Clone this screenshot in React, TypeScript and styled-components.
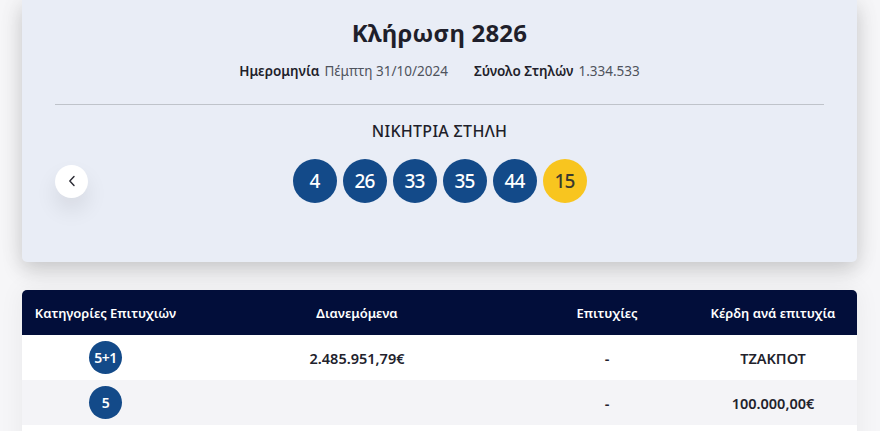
import React from "react";
import styled, { createGlobalStyle } from "styled-components";

const Global = createGlobalStyle`
  html, body { margin: 0; padding: 0; }
  body {
    background: #f6f6f8;
    font-family: "Noto Sans", "Liberation Sans", sans-serif;
    color: #1f1f29;
    overflow: hidden;
  }
`;

const Page = styled.div`
  width: 880px;
  padding: 0 23px 0 22px;
  box-sizing: border-box;
  display: flex;
  flex-direction: column;
  gap: 28px;
`;

const Card = styled.section`
  background: #e9edf6;
  border-radius: 0 0 5px 5px;
  box-shadow: 0 8px 20px rgba(0, 0, 0, 0.17), 0 0 30px rgba(0, 0, 0, 0.05);
  padding: 17px 33px 59px;
  display: flex;
  flex-direction: column;
  align-items: center;
`;

const Title = styled.h1`
  margin: 0;
  font-size: 24px;
  line-height: 32px;
  font-weight: 700;
  color: #1f1f2b;
  letter-spacing: 0.2px;
`;

const Info = styled.div`
  margin-top: 12px;
  display: flex;
  gap: 26px;
  font-size: 13.5px;
  line-height: 20px;
`;

const InfoItem = styled.span`
  display: inline-flex;
  gap: 5px;
`;

const Label = styled.b`
  font-weight: 600;
  color: #1f1f2b;
`;

const Value = styled.span`
  font-weight: 400;
  color: #4f535c;
`;

const Divider = styled.hr`
  align-self: stretch;
  margin: 23px 0 0;
  border: 0;
  border-top: 1px solid #bfc3ca;
`;

const Section = styled.h2`
  margin: 16px 0 0;
  font-size: 16px;
  line-height: 20px;
  font-weight: 500;
  color: #1f1f2b;
  letter-spacing: 0.3px;
`;

const BallRow = styled.div`
  margin-top: 18px;
  align-self: stretch;
  display: grid;
  grid-template-columns: 1fr auto 1fr;
  align-items: center;
`;

const PrevButton = styled.button`
  justify-self: start;
  width: 33px;
  height: 33px;
  border-radius: 50%;
  border: 0;
  background: #ffffff;
  box-shadow: 0 12px 22px rgba(0, 0, 0, 0.09);
  display: flex;
  align-items: center;
  justify-content: center;
  padding: 0;
  cursor: pointer;
`;

const Balls = styled.div`
  display: flex;
  gap: 6px;
`;

const Ball = styled.span<{ $bonus?: boolean }>`
  width: 44px;
  height: 44px;
  border-radius: 50%;
  background: ${(p) => (p.$bonus ? "#f8c51f" : "#134a89")};
  color: ${(p) => (p.$bonus ? "#3a3a2e" : "#ffffff")};
  display: flex;
  align-items: center;
  justify-content: center;
  font-size: 19px;
  font-weight: 500;
  letter-spacing: -0.8px;
`;

const Table = styled.table`
  width: 100%;
  border-collapse: collapse;
  table-layout: fixed;
  box-shadow: 0 0 24px rgba(0, 0, 0, 0.06);
`;

const HeadCell = styled.th<{ $w: number }>`
  width: ${(p) => p.$w}px;
  background: #020e3a;
  color: #ffffff;
  font-size: 13px;
  font-weight: 600;
  height: 45px;
  padding: 0;
  text-align: center;
  &:first-child { border-top-left-radius: 5px; }
  &:last-child { border-top-right-radius: 5px; }
`;

const Row = styled.tr<{ $alt?: boolean }>`
  background: ${(p) => (p.$alt ? "#f4f4f7" : "#ffffff")};
`;

const Cell = styled.td`
  height: 45px;
  padding: 0;
  text-align: center;
  font-size: 14.5px;
  font-weight: 600;
  color: #22222c;
`;

const Badge = styled.span`
  display: inline-flex;
  width: 33px;
  height: 33px;
  border-radius: 50%;
  background: #134a89;
  color: #fff;
  align-items: center;
  justify-content: center;
  font-size: 14px;
  font-weight: 600;
  vertical-align: middle;
  letter-spacing: -0.5px;
`;

const rows = [
  { cat: "5+1", dist: "2.485.951,79€", wins: "-", prize: "ΤΖΑΚΠΟΤ" },
  { cat: "5", dist: "", wins: "-", prize: "100.000,00€" },
  { cat: "4+1", dist: "", wins: "", prize: "" },
];

export default function App() {
  return (
    <>
      <Global />
      <Page>
        <Card>
          <Title>Κλήρωση 2826</Title>
          <Info>
            <InfoItem>
              <Label>Ημερομηνία</Label>
              <Value>Πέμπτη 31/10/2024</Value>
            </InfoItem>
            <InfoItem>
              <Label>Σύνολο Στηλών</Label>
              <Value>1.334.533</Value>
            </InfoItem>
          </Info>
          <Divider />
          <Section>ΝΙΚΗΤΡΙΑ ΣΤΗΛΗ</Section>
          <BallRow>
            <PrevButton aria-label="Προηγούμενη">
              <svg width="10" height="12" viewBox="0 0 10 12" fill="none">
                <path d="M7 1.5 L2.8 6 L7 10.5" stroke="#2a2a33" strokeWidth="1.4" strokeLinecap="round" strokeLinejoin="round" />
              </svg>
            </PrevButton>
            <Balls>
              {[4, 26, 33, 35, 44].map((n) => (
                <Ball key={n}>{n}</Ball>
              ))}
              <Ball $bonus>15</Ball>
            </Balls>
            <span />
          </BallRow>
        </Card>
        <Table>
          <thead>
            <tr>
              <HeadCell $w={167}>Κατηγορίες Επιτυχιών</HeadCell>
              <HeadCell $w={336}>Διανεμόμενα</HeadCell>
              <HeadCell $w={164}>Επιτυχίες</HeadCell>
              <HeadCell $w={168}>Κέρδη ανά επιτυχία</HeadCell>
            </tr>
          </thead>
          <tbody>
            {rows.map((r, i) => (
              <Row key={r.cat} $alt={i % 2 === 1}>
                <Cell><Badge>{r.cat}</Badge></Cell>
                <Cell>{r.dist}</Cell>
                <Cell>{r.wins}</Cell>
                <Cell>{r.prize}</Cell>
              </Row>
            ))}
          </tbody>
        </Table>
      </Page>
    </>
  );
}
